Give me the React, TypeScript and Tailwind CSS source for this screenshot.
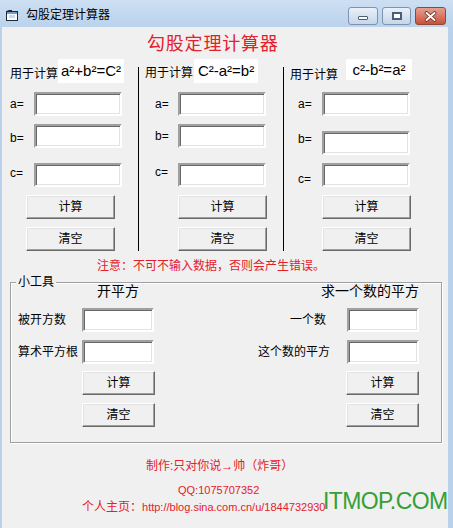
function Field({ className = '' }: { className?: string }) {
  return (
    <div
      className={`h-[24px] bg-white border-2 border-t-[#a0a0a0] border-l-[#a0a0a0] border-r-white border-b-white shadow-[inset_1px_1px_0_#696969,inset_-1px_-1px_0_#e3e3e3] ${className}`}
    />
  )
}

function Btn({ label, className = '' }: { label: string; className?: string }) {
  return (
    <div
      className={`h-[24px] flex items-center justify-center bg-[#f0f0f0] border border-t-white border-l-white border-r-[#696969] border-b-[#696969] shadow-[inset_-1px_-1px_0_#a0a0a0,inset_1px_1px_0_#e3e3e3] ${className}`}
    >
      {label}
    </div>
  )
}

function TitleBar() {
  return (
    <div className="h-[27px] flex items-start bg-gradient-to-b from-[#cddff2] to-[#bad2ec]">
      <svg className="ml-[6px] mt-[10px]" width="12" height="11" viewBox="0 0 12 11">
        <rect x="0.5" y="1.5" width="11" height="9" fill="#fff" stroke="#1b2a3a" />
        <rect x="1" y="2" width="10" height="2" fill="#6f9bd1" />
        <path d="M0.5 1.5 L3 0.5 L6 0.5" fill="none" stroke="#1b2a3a" />
        <rect x="3" y="5" width="6" height="3" fill="#c9daf0" />
      </svg>
      <span className="ml-[8px] mt-[8px] leading-[14px] text-[12px] text-black">勾股定理计算器</span>
      <div className="ml-auto mt-[7px] mr-[7px] flex gap-[4px]">
        <div className="w-[30px] h-[18px] rounded-[3px] border border-[#7d93b0] bg-gradient-to-b from-[#e9f0f8] to-[#c6d6ea] flex items-center justify-center">
          <div className="w-[10px] h-[4px] mt-[4px] bg-white border border-[#4a5d78] rounded-[1px]" />
        </div>
        <div className="w-[29px] h-[18px] rounded-[3px] border border-[#7d93b0] bg-gradient-to-b from-[#e9f0f8] to-[#c6d6ea] flex items-center justify-center">
          <div className="w-[10px] h-[8px] border-2 border-[#4a5d78] bg-white" />
        </div>
        <div className="w-[31px] h-[18px] rounded-[3px] border border-[#954536] bg-gradient-to-b from-[#e4a090] to-[#c9503a] flex items-center justify-center">
          <svg width="13" height="11" viewBox="0 0 13 11">
            <path d="M2.5 2 L10.5 9 M10.5 2 L2.5 9" stroke="#6a2b20" strokeWidth="3.6" strokeLinecap="round" />
            <path d="M2.5 2 L10.5 9 M10.5 2 L2.5 9" stroke="#fff" strokeWidth="2" strokeLinecap="round" />
          </svg>
        </div>
      </div>
    </div>
  )
}

export default function App() {
  return (
    <div className="relative w-[453px] h-[528px] overflow-hidden bg-[#b9d1ea] flex flex-col font-['Liberation_Sans','Noto_Sans_CJK_SC',sans-serif] text-[12px] text-black">
      <TitleBar />
      <div className="flex-1 ml-[2px] mr-[5px] bg-[#f0f0f0] flex flex-col">
        <div className="h-[32px] pt-[6px] pl-[145px] text-[18px] leading-[22px] tracking-[0.8px] text-[#e5202a]">
          勾股定理计算器
        </div>

        <div className="flex items-start h-[192px]">
          {/* column 1 */}
          <div className="w-[136px] flex flex-col">
            <div className="h-[24px] flex items-start">
              <span className="ml-[8px] mt-[8px] leading-[14px]">用于计算</span>
              <span className="h-[24px] w-[66px] bg-white flex items-center justify-center text-[15px] leading-[18px]">
                a²+b²=C²
              </span>
            </div>
            <div className="mt-[9px] h-[24px] flex items-center">
              <span className="ml-[8px] w-[24px]">a=</span>
              <Field className="w-[88px]" />
            </div>
            <div className="mt-[8px] h-[24px] flex items-center">
              <span className="ml-[8px] w-[24px] mt-[3px]">b=</span>
              <Field className="w-[88px]" />
            </div>
            <div className="mt-[15px] h-[24px] flex items-center">
              <span className="ml-[8px] w-[24px] -mt-[4px]">c=</span>
              <Field className="w-[88px]" />
            </div>
            <Btn label="计算" className="mt-[8px] ml-[24px] w-[89px]" />
            <Btn label="清空" className="mt-[8px] ml-[24px] w-[89px]" />
          </div>
          <div className="w-px h-[184px] mt-[8px] bg-black" />

          {/* column 2 */}
          <div className="w-[144px] flex flex-col">
            <div className="h-[24px] flex items-start">
              <span className="ml-[6px] mt-[7px] leading-[14px]">用于计算</span>
              <span className="ml-[1px] h-[24px] w-[64px] bg-white flex items-center justify-center text-[15px] leading-[18px]">
                C²-a²=b²
              </span>
            </div>
            <div className="mt-[9px] h-[24px] flex items-center">
              <span className="ml-[16px] w-[23px]">a=</span>
              <Field className="w-[88px]" />
            </div>
            <div className="mt-[8px] h-[24px] flex items-center">
              <span className="ml-[16px] w-[23px]">b=</span>
              <Field className="w-[88px]" />
            </div>
            <div className="mt-[15px] h-[24px] flex items-center">
              <span className="ml-[16px] w-[23px] -mt-[6px]">c=</span>
              <Field className="w-[88px]" />
            </div>
            <Btn label="计算" className="mt-[8px] ml-[39px] w-[89px]" />
            <Btn label="清空" className="mt-[8px] ml-[39px] w-[89px]" />
          </div>
          <div className="w-px h-[184px] mt-[8px] bg-black" />

          {/* column 3 */}
          <div className="flex-1 flex flex-col">
            <div className="h-[24px] flex items-start">
              <span className="ml-[6px] mt-[9px] leading-[14px]">用于计算</span>
              <span className="ml-[8px] h-[21px] w-[66px] bg-white flex items-center justify-center text-[15px] leading-[18px]">
                c²-b²=a²
              </span>
            </div>
            <div className="mt-[9px] h-[24px] flex items-center">
              <span className="ml-[14px] w-[24px]">a=</span>
              <Field className="w-[88px]" />
            </div>
            <div className="mt-[15px] h-[24px] flex items-center">
              <span className="ml-[14px] w-[24px] -mt-[8px]">b=</span>
              <Field className="w-[88px]" />
            </div>
            <div className="mt-[8px] h-[24px] flex items-center">
              <span className="ml-[14px] w-[24px] mt-[7px]">c=</span>
              <Field className="w-[88px]" />
            </div>
            <Btn label="计算" className="mt-[8px] ml-[38px] w-[89px]" />
            <Btn label="清空" className="mt-[8px] ml-[38px] w-[89px]" />
          </div>
        </div>

        <div className="mt-[8px] pl-[95px] leading-[14px] text-[#e5202a]">
          注意：不可不输入数据，否则会产生错误。
        </div>

        {/* 小工具 group */}
        <div className="relative mt-[9px] ml-[8px] w-[432px] h-[161px] border border-[#a0a0a0] shadow-[inset_1px_1px_0_#fff,1px_1px_0_#fff] flex">
          <span className="absolute left-[5px] -top-[8px] px-[2px] bg-[#f0f0f0] leading-[14px]">小工具</span>
          <div className="ml-[7px] w-[200px] flex flex-col">
            <div className="h-[16px] pl-[79px] text-[14px] leading-[16px]">开平方</div>
            <div className="mt-[9px] h-[24px] flex items-center">
              <span className="w-[64px]">被开方数</span>
              <Field className="w-[72px]" />
            </div>
            <div className="mt-[8px] h-[24px] flex items-center">
              <span className="w-[64px]">算术平方根</span>
              <Field className="w-[72px]" />
            </div>
            <Btn label="计算" className="mt-[7px] ml-[64px] w-[73px]" />
            <Btn label="清空" className="mt-[8px] ml-[64px] w-[73px]" />
          </div>
          <div className="ml-auto mr-[22px] flex flex-col items-end">
            <div className="h-[16px] text-[14px] leading-[16px]">求一个数的平方</div>
            <div className="mt-[9px] h-[24px] flex items-center">
              <span className="mr-[21px]">一个数</span>
              <Field className="w-[72px]" />
            </div>
            <div className="mt-[8px] h-[24px] flex items-center">
              <span className="mr-[17px]">这个数的平方</span>
              <Field className="w-[72px]" />
            </div>
            <Btn label="计算" className="mt-[7px] w-[73px]" />
            <Btn label="清空" className="mt-[8px] w-[73px]" />
          </div>
        </div>

        <div className="mt-[16px] pl-[144px] leading-[14px] text-[#e5202a]">制作:只对你说→帅（炸哥）</div>
        <div className="mt-[11px] pl-[176px] text-[11px] leading-[13px] text-[#e5202a]">QQ:1075707352</div>
        <div className="mt-[3px] pl-[80px] leading-[14px] text-[#e5202a] flex items-center">
          <span>个人主页：</span>
          <span className="text-[11px]">http://blog.sina.com.cn/u/1844732930</span>
        </div>
      </div>
      <div className="absolute left-[323px] top-[490px] text-[23px] leading-[23px] tracking-[-0.6px] text-[#35a035]">
        ITMOP.COM
      </div>
    </div>
  )
}
